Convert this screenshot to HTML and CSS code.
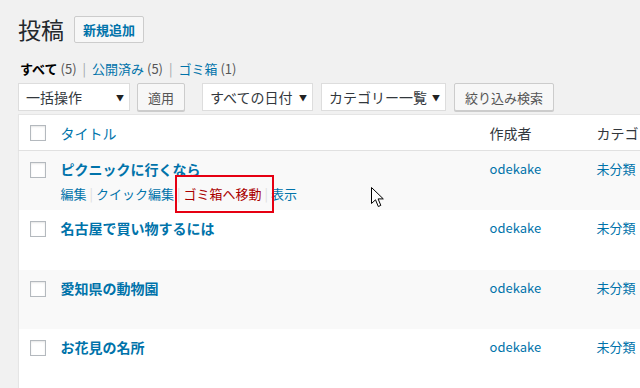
FILE: index.html
```html
<!DOCTYPE html>
<html lang="ja">
  <head>
    <meta charset="utf-8" />
    <link rel="stylesheet" href="styles.css">
  </head>
  <body>
    <div class="wrap">
      <div class="page-head">
        <h1>投稿</h1>
        <a class="button add-new">新規追加</a>
      </div>

      <ul class="subsubsub">
        <li class="current">すべて <span class="count">(5)</span></li>
        <li class="sep">|</li>
        <li><a>公開済み <span class="count">(5)</span></a></li>
        <li class="sep">|</li>
        <li><a>ゴミ箱 <span class="count">(1)</span></a></li>
      </ul>

      <div class="tablenav">
        <div class="select bulk">一括操作<span class="arrow">▼</span></div>
        <a class="button apply">適用</a>
        <div class="select dates">すべての日付<span class="arrow">▼</span></div>
        <div class="select cats">カテゴリー一覧<span class="arrow">▼</span></div>
        <a class="button filter">絞り込み検索</a>
      </div>

      <table class="posts">
        <thead>
          <tr>
            <td class="col-cb"><span class="checkbox"></span></td>
            <th class="col-title"><a>タイトル</a></th>
            <th class="col-author">作成者</th>
            <th class="col-cat">カテゴリー</th>
          </tr>
        </thead>
        <tbody>
          <tr class="alt">
            <td class="col-cb"><span class="checkbox"></span></td>
            <td class="col-title">
              <a class="row-title">ピクニックに行くなら</a>
              <div class="row-actions visible">
                <a>編集</a><span class="bar">|</span><a>クイック編集</a><span class="bar">|</span><a class="trash">ゴミ箱へ移動</a><span class="bar">|</span><a>表示</a>
              </div>
            </td>
            <td class="col-author"><a>odekake</a></td>
            <td class="col-cat"><a>未分類</a></td>
          </tr>
          <tr>
            <td class="col-cb"><span class="checkbox"></span></td>
            <td class="col-title">
              <a class="row-title">名古屋で買い物するには</a>
              <div class="row-actions">
                <a>編集</a><span class="bar">|</span><a>クイック編集</a>
              </div>
            </td>
            <td class="col-author"><a>odekake</a></td>
            <td class="col-cat"><a>未分類</a></td>
          </tr>
          <tr class="alt">
            <td class="col-cb"><span class="checkbox"></span></td>
            <td class="col-title">
              <a class="row-title">愛知県の動物園</a>
              <div class="row-actions">
                <a>編集</a><span class="bar">|</span><a>クイック編集</a>
              </div>
            </td>
            <td class="col-author"><a>odekake</a></td>
            <td class="col-cat"><a>未分類</a></td>
          </tr>
          <tr>
            <td class="col-cb"><span class="checkbox"></span></td>
            <td class="col-title">
              <a class="row-title">お花見の名所</a>
              <div class="row-actions">
                <a>編集</a><span class="bar">|</span><a>クイック編集</a>
              </div>
            </td>
            <td class="col-author"><a>odekake</a></td>
            <td class="col-cat"><a>未分類</a></td>
          </tr>
        </tbody>
      </table>
    </div>

    <svg class="cursor" width="14" height="22" viewBox="0 0 14 22">
      <path d="M0.5 0.5 L0.5 16.5 L4.5 12.8 L7.3 19.5 L9.8 18.4 L7.1 11.9 L12.3 11.9 Z" fill="#fff" stroke="#000" stroke-width="1" />
    </svg>
  </body>
</html>
```

FILE: styles.css
```css
body {
  margin: 0;
  background: #f1f1f1;
  color: #444;
  font-family: "Noto Sans CJK JP", "Noto Sans", sans-serif;
  font-size: 13px;
  overflow: hidden;
  height: 388px;
  position: relative;
}

a {
  color: #0073aa;
  text-decoration: none;
}

.wrap {
  padding: 16px 0 0 18px;
}

.page-head {
  display: flex;
  align-items: center;
  gap: 10px;
  height: 27px;
}

h1 {
  margin: 0;
  font-size: 23px;
  font-weight: 400;
  color: #23282d;
  line-height: 27px;
}

.button {
  display: inline-flex;
  align-items: center;
  box-sizing: border-box;
  border: 1px solid #ccc;
  border-radius: 2px;
  background: #f7f7f7;
  box-shadow: 0 1px 0 #ccc;
  color: #555;
  font-size: 13px;
  white-space: nowrap;
}

.add-new {
  height: 27px;
  padding: 0 8px;
  color: #0073aa;
  font-weight: 700;
  box-shadow: none;
  background: #f7f7f7;
}

.subsubsub {
  list-style: none;
  margin: 16px 0 0 2px;
  padding: 0;
  display: flex;
  gap: 6px;
  height: 20px;
  line-height: 20px;
  color: #666;
}

.subsubsub .current {
  color: #000;
  font-weight: 700;
}

.subsubsub .count {
  color: #555;
  font-weight: 400;
}

.subsubsub .sep {
  color: #a0a5aa;
}

.tablenav {
  display: flex;
  align-items: center;
  margin-top: 4px;
  height: 28px;
}

.select {
  display: flex;
  align-items: center;
  justify-content: space-between;
  box-sizing: border-box;
  height: 28px;
  padding: 0 5px 0 7px;
  background: #fff;
  border: 1px solid #ddd;
  color: #32373c;
  font-size: 14px;
  white-space: nowrap;
}

.select .arrow {
  font-size: 8px;
  color: #222;
}

.bulk {
  width: 112px;
}

.dates {
  width: 111px;
  margin-left: 17px;
}

.cats {
  width: 125px;
  margin-left: 8px;
}

.apply {
  height: 28px;
  padding: 0 10px;
  margin-left: 7px;
}

.filter {
  height: 28px;
  padding: 0 10px;
  margin-left: 8px;
}

.posts {
  margin-top: 3px;
  width: 740px;
  table-layout: fixed;
  border-collapse: collapse;
  background: #fff;
  border: 1px solid #e5e5e5;
  box-shadow: 0 1px 1px rgba(0, 0, 0, 0.04);
}

.posts th,
.posts td {
  box-sizing: border-box;
  padding: 0;
  text-align: left;
  vertical-align: top;
}

.posts thead th,
.posts thead td {
  height: 36px;
  vertical-align: middle;
  border-bottom: 1px solid #e1e1e1;
  font-size: 14px;
  font-weight: 400;
  color: #32373c;
}

.posts thead .checkbox {
  margin-top: 1px;
}

.col-cb {
  width: 32px;
  padding-left: 11px !important;
}

.col-title {
  width: 429px;
  padding-left: 10px !important;
}

.col-author {
  width: 107px;
  padding-left: 10px !important;
}

.col-cat {
  padding-left: 10px !important;
  white-space: nowrap;
}

.posts tbody td {
  height: 59.5px;
  padding-top: 8px;
}

.posts tbody td.col-author,
.posts tbody td.col-cat {
  line-height: 20px;
}

.posts tbody td.col-cb {
  padding-top: 11px;
}

.posts tr.alt {
  background: #f9f9f9;
}

.checkbox {
  display: block;
  width: 16px;
  height: 16px;
  box-sizing: border-box;
  border: 1px solid #b4b9be;
  background: #fff;
  box-shadow: inset 0 1px 2px rgba(0, 0, 0, 0.1);
}

.row-title {
  display: block;
  font-size: 14px;
  font-weight: 700;
  line-height: 20px;
}

.row-actions {
  margin-top: 6px;
  line-height: 18px;
  visibility: hidden;
  white-space: nowrap;
}

.row-actions.visible {
  visibility: visible;
}

.row-actions .bar {
  color: #ddd;
  margin: 0 3px;
}

.row-actions .trash {
  color: #a00;
  position: relative;
}

.row-actions .trash::after {
  content: "";
  position: absolute;
  left: -9px;
  right: -12px;
  top: -9px;
  bottom: -10px;
  border: 2px solid #e60012;
}

.cursor {
  position: absolute;
  left: 371px;
  top: 187px;
}
```
